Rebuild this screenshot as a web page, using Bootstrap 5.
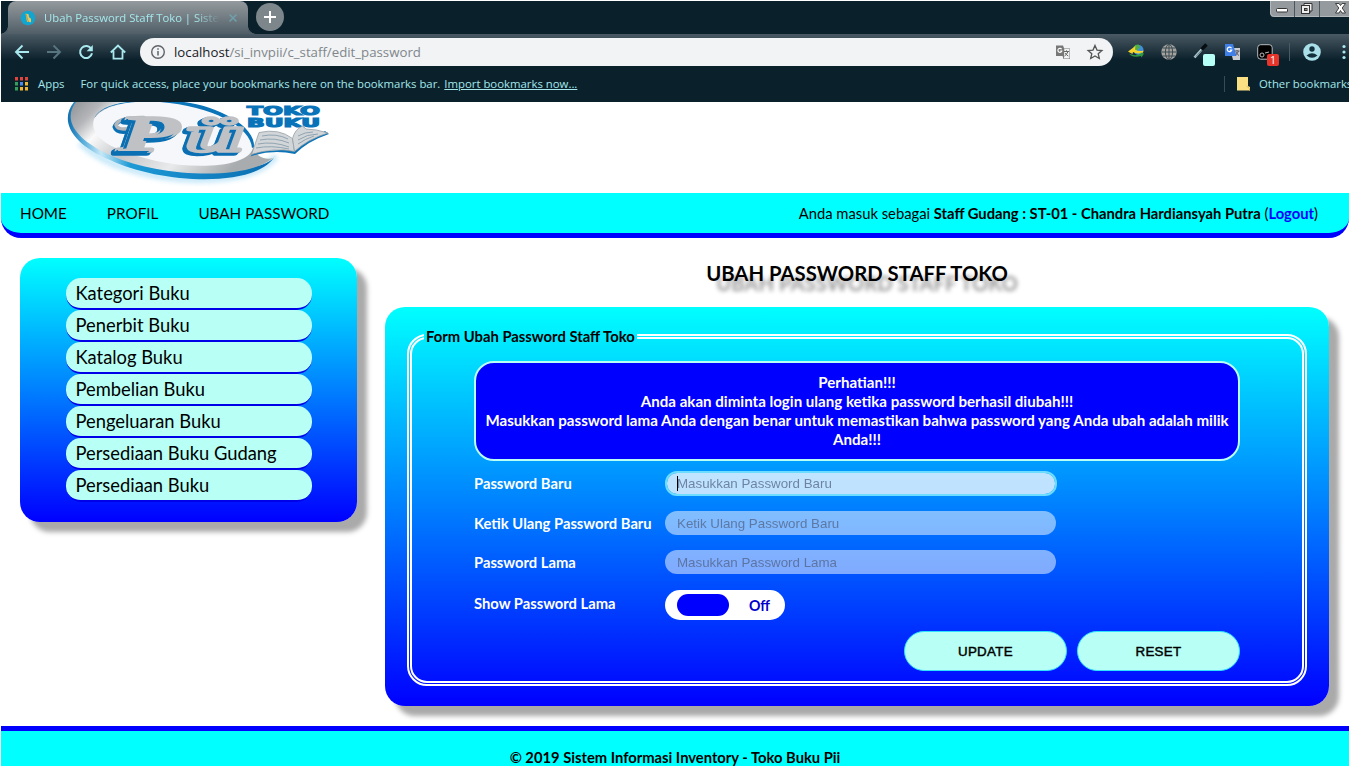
<!DOCTYPE html>
<html lang="id">
<head>
<meta charset="utf-8">
<meta name="viewport" content="width=device-width, initial-scale=1">
<title>Ubah Password Staff Toko | Sistem Informasi Inventory</title>
<link rel="stylesheet" href="https://cdn.jsdelivr.net/npm/bootstrap@5.3.0/dist/css/bootstrap.min.css">
<style>
html,body{height:100%;overflow:hidden}
body{background:#fff;font-family:Lato,"Open Sans",sans-serif;color:#000;padding:1px;font-size:14.75px;line-height:19px}
svg{display:block;flex:none;overflow:visible}
.window{width:1348px;height:765px;overflow:hidden}

/* browser chrome */
.chrome{height:101px;background:#0a202b;color:#a4e8ec;font-family:"Open Sans","Noto Sans",sans-serif;font-size:11.36px;line-height:16px}
.tabstrip{height:33px}
.tab-on{width:240px;height:33px;margin-left:7px;border-radius:8px 8px 0 0;background:linear-gradient(#949a9d,#505e67);position:relative;padding:0 11px 0 12px;font-size:11.3px}
.tab-on::before,.tab-on::after{content:"";position:absolute;bottom:0;width:8px;height:8px}
.tab-on::before{left:-8px;background:radial-gradient(circle at 0 0,transparent 7.5px,#505e67 8px)}
.tab-on::after{right:-8px;background:radial-gradient(circle at 100% 0,transparent 7.5px,#505e67 8px)}
.tab-title{width:176px;margin-left:8px;overflow:hidden;white-space:nowrap;-webkit-mask-image:linear-gradient(90deg,#000 86%,transparent);mask-image:linear-gradient(90deg,#000 86%,transparent)}
.plus{width:28px;height:28px;margin:2px 0 0 8px;background:#7d868b}
.toolbar{height:36px;background:linear-gradient(#4a5963,#0a202b 26px)}
.nav-ico{padding-left:13px;gap:16px;width:139px}
.omni{width:973px;height:28px;background:#f1f3f4;color:#80868b;font-size:13.24px;padding:0 10px}
.omni b{font-weight:400;color:#202124}
.ext{gap:12px;padding-left:13px}
.marks{height:28px;padding-left:14px;white-space:nowrap}

/* page */
.masthead{height:91px}
.mainbar{height:45px;background:#0ff;border-bottom:5px solid #00f;border-radius:0 0 20px 20px;padding:0 31px 0 19px;line-height:20px}
.mainbar .menu{gap:40px;font-size:15.25px}
.mainbar a,.side a{color:#000;text-decoration:none}
.mainbar a.logout{color:#00f}
.panel{background:linear-gradient(#0ff,#00f);border-radius:20px;box-shadow:10px 10px 5px #aaa}
.side{width:337px;height:264px;padding:20px 45px 0 46px}
.side a{display:block;height:32px;border-bottom:2px solid #0000e8;border-radius:15px;background:#b8fff5;font-size:18.35px;line-height:31px;padding-left:9.5px;white-space:nowrap}
.content{width:944px;margin-left:28px}
h1{font-size:20.3px;line-height:30px;font-weight:700;text-align:center;margin:0 0 19px;text-shadow:10px 10px 4px #999}
.formbox{height:399px;padding:16px 22px 0}
fieldset.frame{border:5px double #fff;border-radius:20px;height:363px;padding:0 62px;margin:0}
fieldset.frame legend{float:none;width:auto;margin:0 0 0 -50px;padding:0 2px;font-size:14.8px;line-height:26px;height:26px;font-weight:700}
.notice{height:100px;border:2px solid #b8fff5;border-radius:20px;background:#00f;color:#fff;font-weight:700;text-align:center;padding:10px 4px;margin-top:12px;font-size:15.1px}
.lbl{width:191px;color:#fff;font-weight:700;white-space:nowrap}
.field{width:391px;height:24px;border:0;border-radius:12px;background:rgba(255,255,255,.5);padding:1px 12px 0;font:13.33px/23px "Liberation Sans",Arial,sans-serif;color:#000;outline:0}
.field::placeholder{color:#4f5f80;opacity:.72}
.field.on{width:392px;height:25px;background:linear-gradient(#000,#000) 10px 3px/1px 15px no-repeat,rgba(255,255,255,.75);border:2px solid #6cdcff;padding:0 10px;line-height:21px;background-clip:padding-box}
.switcher{width:120px;height:30px;background:#fff;border-radius:15px;color:#00c;font-weight:700;font-size:14.2px;padding:1px 15px 0 12px}
.knob{width:52px;height:22px;background:#00f;border-radius:11px;margin-top:-1px}
.act{width:163px;height:40px;border:1px solid #2fe0ff;border-radius:20px;background:#b8fff5;font:400 13.33px "Liberation Sans",Arial,sans-serif;letter-spacing:.35px;-webkit-text-stroke:.45px #000;color:#000;padding:0}
.foot{height:40px;margin-top:20px;background:#0ff;border-top:5px solid #00f;font-weight:700;padding-top:17px}
</style>
</head>
<body>
<div class="window">

<div class="chrome">
  <div class="tabstrip d-flex">
    <div class="tab-on d-flex align-items-center">
      <svg width="16" height="16" viewBox="0 0 16 16"><circle cx="8" cy="8" r="7.300" fill="#12a5d0"/><path d="M5.500 3.500l3 .8.500 3 2 1.500v3.400l-4-.4z" fill="#e8c860"/><path d="M6 4l1.500 5 1 3" stroke="#a08a40" stroke-width=".7" fill="none"/></svg>
      <span class="tab-title">Ubah Password Staff Toko | Sistem</span>
      <svg class="ms-auto" width="8" height="8" viewBox="0 0 8 8"><path d="M.5.5l7 7M7.500.5l-7 7" stroke="#6f9fab" stroke-width="1.600"/></svg>
    </div>
    <div class="plus rounded-circle d-flex align-items-center justify-content-center"><svg width="12" height="12" viewBox="0 0 12 12"><path d="M6 0v12M0 6h12" stroke="#fff" stroke-width="2"/></svg></div>
    <svg class="ms-auto" width="79" height="16" viewBox="0 0 79 16">
      <path d="M0 0H79V16H4Q0 16 0 12z" fill="#949a9e"/><path d="M.5 0v12q0 3.500 4 3.500H79" fill="none" stroke="#b3b8bb"/>
      <path d="M24.500 0V16M49.500 0V16" stroke="#4b565d"/>
      <rect x="6.500" y="7.500" width="11" height="3.500" rx="1" fill="#fff" stroke="#333"/>
      <path d="M34 2.500h8v7.500h-2v2H32V4.500h2z" fill="#eee" stroke="#333"/><rect x="31.500" y="4.500" width="8" height="8" fill="#eee" stroke="#333"/><rect x="34.500" y="7.500" width="2.500" height="2" fill="#888" stroke="#333"/>
      <path d="M65.500 2.500h3.500l1.500 2 1.500-2h3.500l-3.300 4.500 3.300 5H72L70.500 9.500 69 12h-3.500l3.300-5z" fill="#fff" stroke="#333" stroke-width=".9"/>
    </svg>
  </div>

  <div class="toolbar d-flex align-items-center">
    <div class="nav-ico d-flex align-items-center">
      <svg width="16" height="16" viewBox="0 0 16 16" fill="none" stroke="#a8e8ee" stroke-width="1.900"><path d="M15 8H2.500M8.500 1.500L2 8l6.500 6.500"/></svg>
      <svg width="16" height="16" viewBox="0 0 16 16" fill="none" stroke="#56757f" stroke-width="1.900"><path d="M1 8h12.500M7.500 1.500L14 8l-6.500 6.500"/></svg>
      <svg width="16" height="16" viewBox="0 0 16 16" fill="none" stroke="#a8e8ee" stroke-width="2"><path d="M13.300 5A6 6 0 1 0 14 9.300"/><path d="M14.800 1v6.200H8.600z" fill="#a8e8ee" stroke="none"/></svg>
      <svg width="16" height="16" viewBox="0 0 16 16" fill="none" stroke="#a8e8ee" stroke-width="1.800"><path d="M.8 8.500L8 1.600l7.200 6.900M3.500 7v7.600h9V7"/></svg>
    </div>
    <div class="omni rounded-pill d-flex align-items-center">
      <svg width="16" height="16" viewBox="0 0 16 16"><circle cx="8" cy="8" r="6.300" fill="none" stroke="#5f6368" stroke-width="1.400"/><path d="M8 7v4.500M8 4.200v1.600" stroke="#5f6368" stroke-width="1.500"/></svg>
      <span class="ms-2"><b>localhost</b>/si_invpii/c_staff/edit_password</span>
      <svg class="ms-auto" width="16" height="16" viewBox="0 0 16 16"><path d="M1 1.500h7l1.200 3H15V15H8.500L7.600 12H1z" fill="#777"/><path d="M9.300 5h5.200v9.500H9z" fill="#f1f3f4"/><path d="M6.600 5.300a2 2 0 1 0 .2 1.700H5.300" fill="none" stroke="#fff" stroke-width="1.100"/><path d="M9 7.500h5M11.500 6.300v1.200M13 7.500q-1 3-3.500 4.500M10.300 9q1.200 2.300 3 3" fill="none" stroke="#666"/></svg>
      <svg style="margin-left:16px" width="16" height="16" viewBox="0 0 16 16"><path d="M8 1.500l2 4.600 4.900.4-3.700 3.200 1.100 4.800L8 12l-4.300 2.500 1.100-4.800L1.100 6.500 6 6.100z" fill="none" stroke="#555" stroke-width="1.300"/></svg>
    </div>
    <div class="ext d-flex align-items-center">
      <svg width="20" height="20" viewBox="0 0 20 20"><circle cx="12.500" cy="8" r="5" fill="#3f8fd8"/><path d="M7.500 5q2-3 5.500-2.300l1 3-3 2.500-3 .5z" fill="#4fae45"/><path d="M2 9.500L9.500 4l-.5 3.500q4 2.500 8.500 1l-.5 2q-6 2-10-.5l-.5 2z" fill="#f5d32a"/><path d="M3 11.500q6 3 12 .5l-.5-1.500 3.500 1-2.500 4-.5-1.500q-8 2.500-12-2.500z" fill="#2c9a3d"/></svg>
      <svg width="20" height="20" viewBox="0 0 20 20"><circle cx="11" cy="10" r="7.700" fill="#a3a3a0"/><g fill="none" stroke="#3d4a50"><ellipse cx="11" cy="10" rx="3.600" ry="7.500"/><path d="M11 2.500v15M3.500 10h15M4.500 6h13M4.500 14h13"/></g></svg>
      <svg width="20" height="20" viewBox="0 0 20 20"><path d="M4.500 15.500L13 6" stroke="#a9c4ca" stroke-width="2.600"/><path d="M6 14.500l6.500-7" stroke="#5d7d86"/><path d="M11.500 7.500L16.500 2.500" stroke="#050d10" stroke-width="3.600"/><rect x="13" y="12" width="12" height="12" rx="2" fill="#b5fff6"/></svg>
      <svg width="20" height="20" viewBox="0 0 20 20"><path d="M8 6h10v12h-7z" fill="#c9ccd0"/><path d="M3 2h8l3.500 12H3z" fill="#3f7fe8"/><path d="M9.500 6.200a2.300 2.300 0 1 0 .2 2H7.800" fill="none" stroke="#fff" stroke-width="1.200"/><path d="M12.500 9h5M15 8v1M16.500 9q-1 3-3 4M14 10q1 2.500 3 3.500" fill="none" stroke="#556"/></svg>
      <svg width="20" height="20" viewBox="0 0 20 20"><rect x="3.700" y="2.700" width="14.500" height="14.500" rx="3" fill="#000" stroke="#b7bcbf"/><circle cx="8" cy="13" r="2" fill="none" stroke="#bbb"/><path d="M11 11l4-1" stroke="#bbb"/><rect x="13" y="12" width="12" height="12" rx="2" fill="#e8352c"/><text x="19" y="22" font-size="10.500" fill="#fff" text-anchor="middle">1</text></svg>
      <svg width="1" height="18" viewBox="0 0 1 18" style="margin-left:3px"><rect width="1" height="18" fill="#4a5a64"/></svg>
      <svg width="20" height="20" viewBox="0 0 20 20"><circle cx="10" cy="10" r="8.800" fill="#a8dfe8"/><circle cx="10" cy="7" r="2.700" fill="#12303c"/><path d="M4.500 13.500q5.500-4.600 11 0-5.500 4.600-11 0z" fill="#12303c"/></svg>
      <svg width="4" height="16" viewBox="0 0 4 16" style="margin-left:8px" fill="#a8e8ee"><circle cx="2" cy="2.500" r="1.600"/><circle cx="2" cy="8" r="1.600"/><circle cx="2" cy="13.500" r="1.600"/></svg>
    </div>
  </div>

  <div class="marks d-flex align-items-center">
    <svg width="13" height="14" viewBox="0 0 13 14"><g fill="#e0443c"><path d="M0 0h3v3.500H0zM5 0h3v3.500H5zM10 0h3v3.500h-3z"/></g><path d="M0 5h3v3.500H0z" fill="#34a05a"/><path d="M5 5h3v3.500H5z" fill="#4b8bf0"/><path d="M10 5h3v3.500h-3zM5 10h3v3.500H5zM10 10h3v3.500h-3z" fill="#f2b632"/><path d="M0 10h3v3.500H0z" fill="#34a05a"/></svg>
    <span style="margin-left:10px">Apps</span>
    <span style="margin-left:16px">For quick access, place your bookmarks here on the bookmarks bar.</span>
    <u class="ms-1">Import bookmarks now...</u>
    <svg class="ms-auto" width="1" height="16" viewBox="0 0 1 16"><rect width="1" height="16" fill="#3b4b54"/></svg>
    <svg width="13" height="14" viewBox="0 0 13 14" style="margin:0 9px 0 12px"><path d="M0 0h11v9l2 1v3.500H0z" fill="#fbdf83"/><path d="M9.500 9l3 2.500v2" stroke="#e0b95a" fill="none"/></svg>
    <span style="width:90px">Other bookmarks</span>
  </div>
</div>

<header class="masthead overflow-hidden">
  <svg width="290" height="91" viewBox="60 102 290 91" style="margin-left:59px">
    <defs>
      <linearGradient id="ring" x1="0" x2="1" y1="0" y2=".35"><stop offset="0" stop-color="#8f9295"/><stop offset=".14" stop-color="#b4b6b9"/><stop offset=".25" stop-color="#fafafa"/><stop offset=".45" stop-color="#c3c5c8"/><stop offset=".72" stop-color="#e9eaeb"/><stop offset="1" stop-color="#a9acae"/></linearGradient>
      <linearGradient id="rim" x1="0" x2="1"><stop offset="0" stop-color="#0e6fb0"/><stop offset=".08" stop-color="#5fb2dd"/><stop offset=".16" stop-color="#c5e8f7"/><stop offset=".3" stop-color="#1d9ad6"/><stop offset="1" stop-color="#0a6cb0"/></linearGradient>
      <linearGradient id="met" x1="0" x2="1" y2="1"><stop offset="0" stop-color="#a9abae"/><stop offset=".5" stop-color="#cfd0d2"/><stop offset="1" stop-color="#b0b2b5"/></linearGradient>
      <filter id="glow" x="-10%" y="-10%" width="120%" height="130%"><feGaussianBlur stdDeviation="2.500"/></filter>
    </defs>
    <path d="M80 143C95 156 110 164 125 168C180 186 255 184 276 156" fill="none" stroke="#a8dcf5" stroke-width="6" filter="url(#glow)" opacity=".7"/>
    <path d="M74 102C58 122 74 145 110 160C160 184 258 189 275.500 155C270 170 220 172 190 168L100 102z" fill="url(#rim)"/>
    <path d="M76 102C62 120 76 140 112 156C160 177 246 181 273 158C267 160 254 158 254 145C250 128 222 109 183 102z" fill="url(#ring)"/>
    <path d="M94 119C100 109 116 103.500 140 102H172C218 107 255 127 253 148C248 167 198 170 156 161C114 151 88 138 94 119z" fill="#f5f7fa"/>
    <path d="M94 119C99 109 114 103.500 136 102H128C108 104 97 111 94 119zM160 102C212 106 251 127 252 148L254 147C256 126 217 106 184 102z" fill="#0b74b8"/>
    <g fill="none" stroke-linecap="round" stroke-linejoin="round">
      <path d="M131 129Q117 132 115 125Q117 116 140 117" stroke="#0b6fb3" stroke-width="4" transform="translate(-.5 2)"/>
      <path d="M131 128Q118 131 116 125Q118 117 144 117.500" stroke="#b4b6b9" stroke-width="3.500"/>
    </g>
    <g font-family="'Liberation Serif',serif" font-weight="700" font-style="italic" font-size="51">
      <g style="text-shadow:-1px 1px #0b6fb3,-2px 2px #0b6fb3,-2px 3px #0b6fb3" fill="#bfc1c4" stroke="#bfc1c4" stroke-width="3.500" stroke-linejoin="round"><text x="118" y="151" textLength="60" lengthAdjust="spacingAndGlyphs" paint-order="stroke">P</text><text x="186" y="151" textLength="58" lengthAdjust="spacingAndGlyphs">ü</text></g>
    </g>
    <g font-family="'DejaVu Sans',sans-serif" font-weight="700" font-size="12.500" fill="#0873b8" stroke="#0873b8" stroke-width="1.200"><text x="247" y="114.600" textLength="73" lengthAdjust="spacingAndGlyphs">TOKO</text><text x="247" y="127" textLength="73" lengthAdjust="spacingAndGlyphs">BUKU</text></g>
    <path d="M250.500 156.500Q272 149 295 154Q308 141 329 134L325 131L293 149L254 152z" fill="#0b74b8"/>
    <path d="M259 132.500Q279 128 292.500 138.500L294.500 151.500Q274 147 251.500 154.500z" fill="#d3d6d8" stroke="#8b979f" stroke-width=".7"/>
    <path d="M292.500 138.500Q295 129 302.500 126L306 129Q316 129 328 133Q308 139 294.500 151.500z" fill="#d3d6d8" stroke="#8b979f" stroke-width=".7"/>
    <path d="M262 136q14-3 26 3M260 140q15-3 29 3M258 144q15-3 31 3M256 148q15-3 33 1M298 136q7-4 15-4M298 140q9-6 20-6M298 144q7-5 16-8" fill="none" stroke="#7d97a8" stroke-width=".8"/>
  </svg>
</header>

<nav class="mainbar d-flex align-items-center justify-content-between">
  <div class="menu d-flex"><a href="#">HOME</a><a href="#">PROFIL</a><a href="#">UBAH PASSWORD</a></div>
  <div>Anda masuk sebagai <b>Staff Gudang : ST-01 - Chandra Hardiansyah Putra</b> (<a class="logout fw-bold" href="#">Logout</a>)</div>
</nav>

<main class="d-flex align-items-start" style="padding:20px 0 0 19px">
  <aside class="side panel">
    <a href="#">Kategori Buku</a><a href="#">Penerbit Buku</a><a href="#">Katalog Buku</a><a href="#">Pembelian Buku</a><a href="#">Pengeluaran Buku</a><a href="#">Persediaan Buku Gudang</a><a href="#">Persediaan Buku</a>
  </aside>
  <section class="content">
    <h1>UBAH PASSWORD STAFF TOKO</h1>
    <form class="formbox panel" onsubmit="return false">
      <fieldset class="frame">
        <legend>Form Ubah Password Staff Toko</legend>
        <div class="notice">Perhatian!!!<br>Anda akan diminta login ulang ketika password berhasil diubah!!!<br>Masukkan password lama Anda dengan benar untuk memastikan bahwa password yang Anda ubah adalah milik Anda!!!</div>
        <div class="d-flex align-items-center" style="margin-top:10px"><label class="lbl" for="p1">Password Baru</label><input id="p1" class="field on" type="password" placeholder="Masukkan Password Baru"></div>
        <div class="d-flex align-items-center" style="margin-top:15px"><label class="lbl" for="p2">Ketik Ulang Password Baru</label><input id="p2" class="field" type="password" placeholder="Ketik Ulang Password Baru"></div>
        <div class="d-flex align-items-center" style="margin-top:15px"><label class="lbl" for="p3">Password Lama</label><input id="p3" class="field" type="password" placeholder="Masukkan Password Lama"></div>
        <div class="d-flex align-items-center" style="margin-top:16px"><span class="lbl pb-1">Show Password Lama</span><div class="switcher d-flex align-items-center justify-content-between"><span class="knob"></span>Off</div></div>
        <div class="d-flex justify-content-end" style="margin-top:11px;gap:10px"><button class="act" type="submit">UPDATE</button><button class="act" type="reset">RESET</button></div>
      </fieldset>
    </form>
  </section>
</main>

<footer class="foot text-center">© 2019 Sistem Informasi Inventory - Toko Buku Pii</footer>
</div>
</body>
</html>
